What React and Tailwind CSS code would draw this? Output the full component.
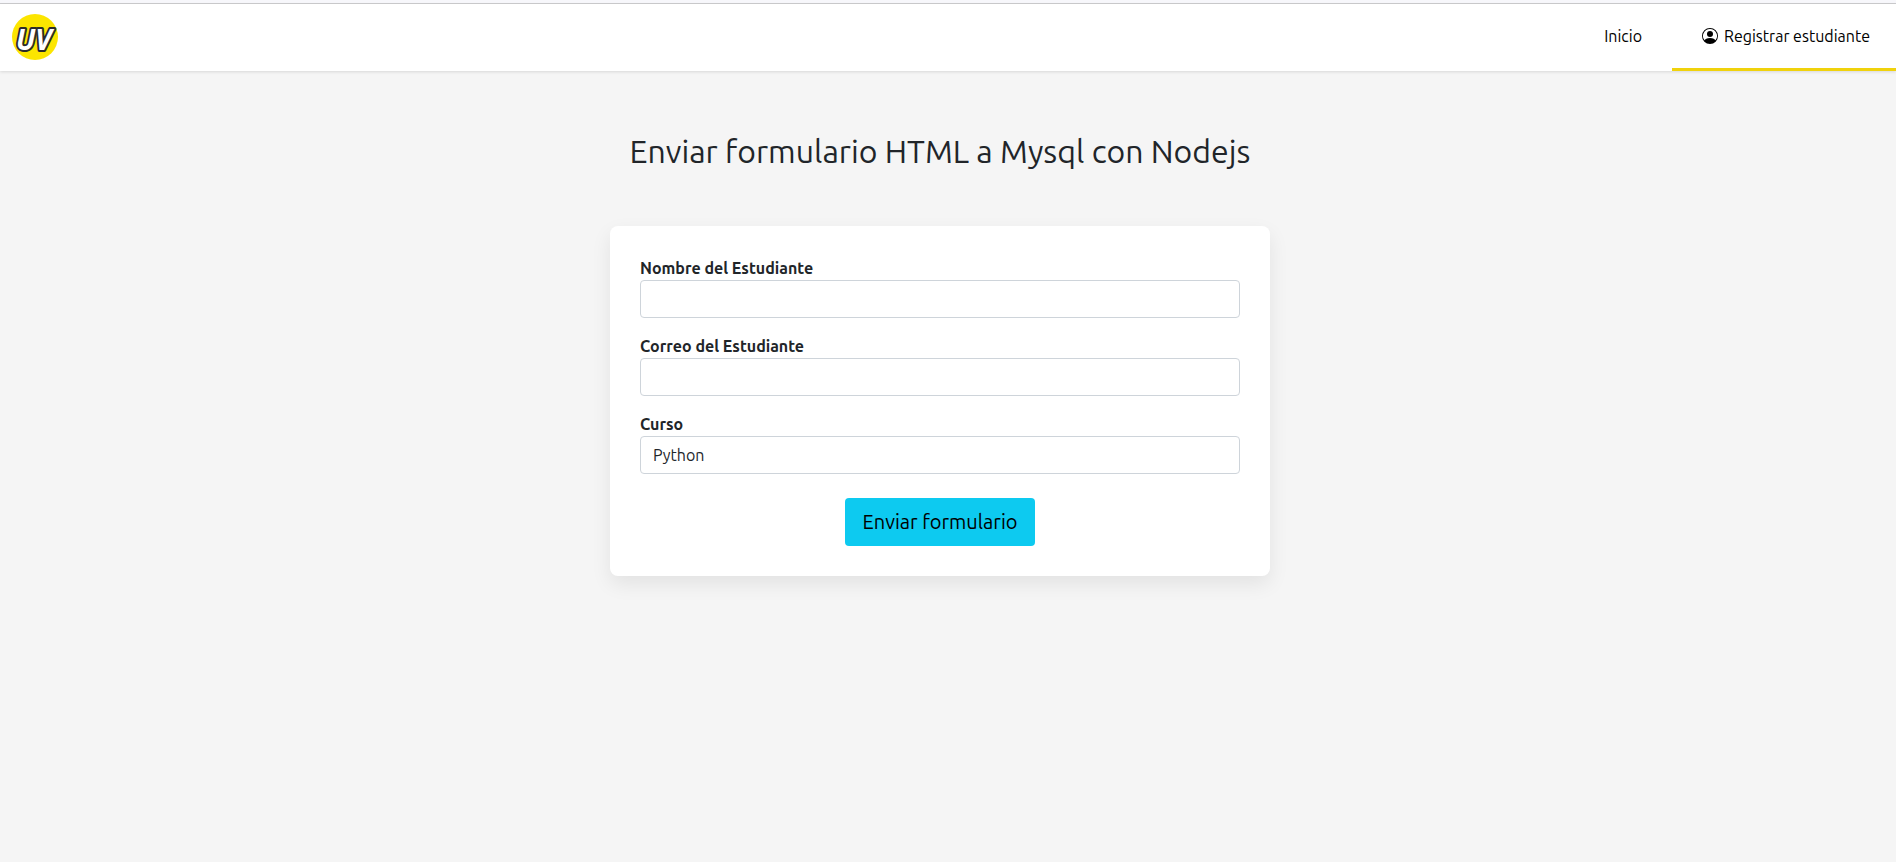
import { BsPersonCircle } from "react-icons/bs";

const fieldClass =
  "block h-[38px] w-full appearance-none rounded-[4px] border border-[#ced4da] bg-white px-3 text-base text-[#212529] outline-none focus:border-[#86b7fe]";

function Logo() {
  return (
    <svg viewBox="0 0 48 48" className="size-12" role="img" aria-label="UV">
      <circle cx="24" cy="24" r="23" fill="#fce500" />
      <text
        x="5"
        y="37"
        fill="#fff"
        stroke="#2b2b2b"
        strokeWidth="4"
        strokeLinejoin="round"
        paintOrder="stroke"
        fontFamily="'Open Sans', 'Liberation Sans', sans-serif"
        fontStyle="italic"
        fontWeight="700"
        fontSize="28"
      >
        UV
      </text>
    </svg>
  );
}

function Field({ id, label, children }) {
  return (
    <div className="mb-4">
      <label htmlFor={id} className="block text-base leading-6 font-bold">
        {label}
      </label>
      {children}
    </div>
  );
}

export default function App() {
  return (
    <div className="min-h-screen bg-[#f5f5f5] font-['Ubuntu','Noto_Sans',sans-serif] text-[#212529]">
      <div className="h-1 border-b border-[#cccccf] bg-[#f7f7fb]" />
      <header className="flex h-[67px] items-stretch justify-between bg-white shadow-[0_1px_3px_rgba(0,0,0,0.12)]">
        <a href="#" className="flex items-center pb-0.5 pl-[11px]">
          <Logo />
        </a>
        <nav className="flex text-base text-black">
          <a href="#" className="flex items-center border-b-3 border-transparent px-[30px]">
            Inicio
          </a>
          <a
            href="#"
            className="flex items-center gap-1.5 border-b-3 border-[#f0d20c] pr-[26px] pl-[30px]"
          >
            <BsPersonCircle className="size-4" />
            Registrar estudiante
          </a>
        </nav>
      </header>

      <main className="flex flex-col items-center pt-[60px] pr-4">
        <h1 className="mb-[55px] text-center text-[32px] leading-10">
          Enviar formulario HTML a Mysql con Nodejs
        </h1>
        <form className="w-full max-w-[660px] rounded-lg bg-white p-[30px] shadow-[0_8px_20px_rgba(0,0,0,0.08)]">
          <Field id="nombre" label="Nombre del Estudiante">
            <input id="nombre" type="text" className={fieldClass} />
          </Field>
          <Field id="correo" label="Correo del Estudiante">
            <input id="correo" type="email" className={fieldClass} />
          </Field>
          <Field id="curso" label="Curso">
            <select id="curso" className={fieldClass}>
              <option>Python</option>
            </select>
          </Field>
          <div className="flex justify-center pt-2">
            <button
              type="submit"
              className="h-12 rounded-[4px] bg-[#0dcaf0] px-[18px] text-[20px] text-black"
            >
              Enviar formulario
            </button>
          </div>
        </form>
      </main>
    </div>
  );
}
